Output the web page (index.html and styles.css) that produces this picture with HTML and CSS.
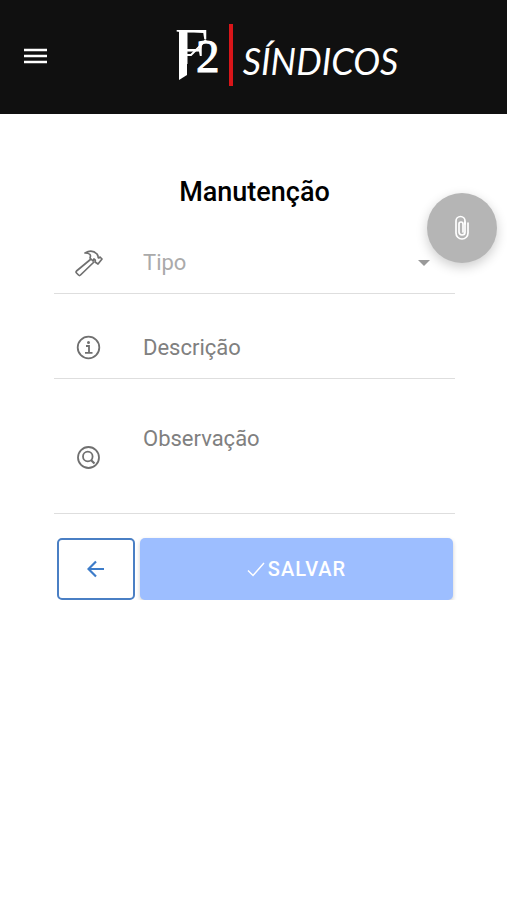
FILE: index.html
```html
<!DOCTYPE html>
<html lang="pt-BR">

<head>
    <meta charset="UTF-8">
    <meta name="viewport" content="width=device-width, initial-scale=1.0">
    <title>Manutenção</title>
    <link rel="stylesheet" href="styles.css">
</head>

<body>
    <header class="toolbar">
        <button type="button" class="menu-button" aria-label="Menu">
            <svg width="24" height="18" viewBox="0 0 24 18">
                <path d="M0 2h23M0 8h23M0 14h23" stroke="#fff" stroke-width="2.6" />
            </svg>
        </button>
        <div class="logo">
            <svg class="logo-mark" width="46" height="62" viewBox="0 0 46 62">
                <text class="mark-f" x="0" y="45">F<tspan class="mark-2" x="21" y="48">2</tspan></text>
                <path d="M0 40h20v7H0z" fill="#101010" />
                <path d="M4 6h8v45l-8 5z" fill="#fff" />
                <path d="M11 31h5L31 16" fill="none" stroke="#fff" stroke-width="2" />
            </svg>
            <span class="logo-bar"></span>
            <span class="logo-name">SÍNDICOS</span>
        </div>
    </header>

    <main class="content">
        <button type="button" class="attach-button" aria-label="Anexar">
            <svg width="18" height="26" viewBox="0 0 18 26" fill="none" stroke="#fff" stroke-width="1.7" stroke-linecap="round">
                <path d="M12 7v10a3 3 0 0 1-6 0V9a2 2 0 0 1 4 0v8" />
                <path d="M15 8v10a6 6 0 0 1-12 0V6a4.500 4.500 0 0 1 9 0v3" />
            </svg>
        </button>

        <h1>Manutenção</h1>

        <form id="maintenanceForm">
            <div class="item">
                <label for="tipo" aria-label="Tipo">
                    <svg width="30" height="30" viewBox="0 0 30 30" fill="none" stroke="#707070" stroke-width="1.7" stroke-linejoin="round">
                        <path d="M17 11L2.500 23q-1 1 0 2l2 2q1 1 2 0L20 14" />
                        <path d="M11 5q7-4 12 1l1 2q0 2 1 2l1-1 2 2-4 5-3-2q1-2-1-3l-1 2-3-3q2-5-5-5z" />
                    </svg>
                </label>
                <select id="tipo" required>
                    <option value="" disabled selected>Tipo</option>
                </select>
                <svg class="arrow" width="12" height="6" viewBox="0 0 12 6">
                    <path d="M0 0h12l-6 6z" fill="#999" />
                </svg>
            </div>
            <div class="item">
                <label for="descricao" aria-label="Descrição">
                    <svg width="30" height="30" viewBox="0 0 30 30" fill="none" stroke="#707070" stroke-width="1.8">
                        <circle cx="14.500" cy="14.500" r="10.800" />
                        <path d="M12 13h3v7M11 19.800h7.500" />
                        <circle cx="14.500" cy="9.500" r="1.500" fill="#707070" stroke="none" />
                    </svg>
                </label>
                <input type="text" id="descricao" placeholder="Descrição">
            </div>
            <div class="item item-tall">
                <label for="observacao" aria-label="Observação">
                    <svg width="30" height="30" viewBox="0 0 30 30" fill="none" stroke="#707070" stroke-width="1.8">
                        <circle cx="14.500" cy="14.500" r="10.500" />
                        <circle cx="13.800" cy="13.500" r="4.800" />
                        <path d="M17 17l3.500 3.500" stroke-width="2.200" />
                    </svg>
                </label>
                <textarea id="observacao" placeholder="Observação"></textarea>
            </div>
            <div class="buttons">
                <button type="button" class="back-button" aria-label="Voltar">
                    <svg width="18" height="18" viewBox="0 0 18 18" fill="none" stroke="#3d7cc9" stroke-width="2.200">
                        <path d="M17 9H2M9 1.500L1.500 9 9 16.500" />
                    </svg>
                </button>
                <button type="submit" class="save-button">
                    <svg width="18" height="16" viewBox="0 0 18 16" fill="none" stroke="#fff" stroke-width="1.500">
                        <path d="M1 9.500l5 5L17 2" />
                    </svg>
                    SALVAR
                </button>
            </div>
        </form>
    </main>
</body>

</html>
```

FILE: styles.css
```css
* {
    margin: 0;
    padding: 0;
    box-sizing: border-box;
}

body {
    font-family: Roboto, sans-serif;
    background-color: #fff;
    color: #000;
}

button {
    border: none;
    cursor: pointer;
    display: flex;
    align-items: center;
    justify-content: center;
}

.toolbar {
    display: flex;
    align-items: center;
    height: 114px;
    padding: 0 24px;
    background-color: #101010;
}

.menu-button {
    background: none;
}

.logo {
    flex: 1;
    display: flex;
    align-items: center;
    justify-content: center;
    padding-left: 42px;
    padding-bottom: 4px;
}

.logo-mark {
    margin-right: 8px;
    overflow: visible;
}

.logo-mark text {
    font-family: "Liberation Serif", serif;
    fill: #fff;
}

.mark-f {
    font-size: 60px;
}

.mark-2 {
    font-size: 47px;
    stroke: #fff;
}

.logo-bar {
    width: 4px;
    height: 62px;
    margin-right: 10px;
    background-color: #d91519;
}

.logo-name {
    padding-top: 12px;
    font-family: Lato, sans-serif;
    font-size: 36px;
    font-style: italic;
    line-height: 40px;
    color: #fff;
}

.content {
    position: relative;
    padding: 60px 52px 0 54px;
}

h1 {
    margin-bottom: 22px;
    font-size: 27px;
    font-weight: 500;
    line-height: 36px;
    text-align: center;
}

/* floats over the form */
.attach-button {
    position: absolute;
    top: 79px;
    right: 10px;
    width: 70px;
    height: 70px;
    border-radius: 50%;
    background-color: #b5b5b5;
    box-shadow: 0 4px 12px rgba(0, 0, 0, 0.2);
}

.item {
    display: flex;
    align-items: center;
    height: 62px;
    padding-left: 20px;
    border-bottom: 1px solid #dedede;
}

.item + .item {
    height: 85px;
    padding-top: 24px;
}

.item + .item-tall {
    height: 135px;
}

.item label {
    display: flex;
    width: 69px;
}

.item select,
.item input,
.item textarea {
    flex: 1;
    min-width: 0;
    border: none;
    outline: none;
    background: none;
    font-family: inherit;
    font-size: 22px;
    line-height: 28px;
    resize: none;
    appearance: none;
}

.item textarea {
    height: 66px;
}

.item select {
    color: #aaa;
}

.item ::placeholder {
    color: #808080;
    opacity: 1;
}

.arrow {
    margin-right: 25px;
}

.buttons {
    display: flex;
    gap: 5px;
    padding: 24px 2px 0 3px;
}

.back-button {
    width: 78px;
    height: 62px;
    border: 2px solid #4a7fc4;
    border-radius: 5px;
    background-color: #fff;
}

.save-button {
    flex: 1;
    height: 62px;
    gap: 3px;
    border-radius: 5px;
    background-color: #9dbeff;
    box-shadow: 0 2px 4px rgba(0, 0, 0, 0.2);
    color: #fff;
    font-family: inherit;
    font-size: 20px;
    font-weight: 500;
    letter-spacing: 1px;
}
```
